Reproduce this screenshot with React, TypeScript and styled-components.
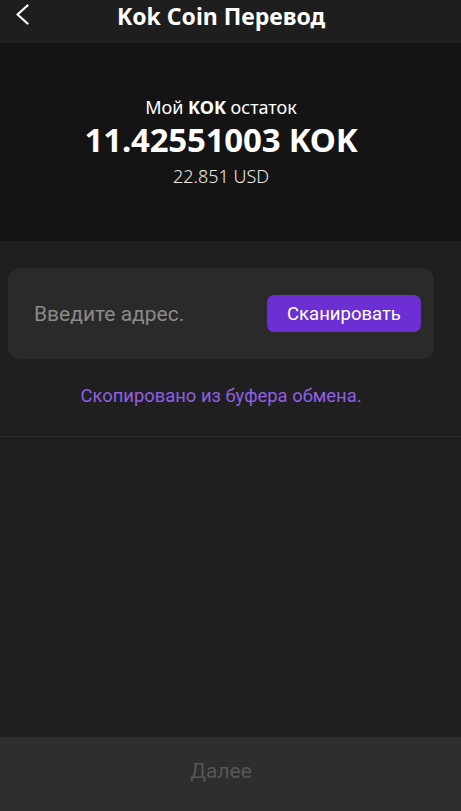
import styled, { createGlobalStyle } from 'styled-components'

const Global = createGlobalStyle`
  html, body {
    margin: 0;
    padding: 0;
    background: #1f1f1f;
  }
  #root {
    min-height: 100vh;
  }
`

// the app content is laid out in a 442px column; the last 19px are only background
const GUTTER = '19px'

const Page = styled.div`
  width: 461px;
  height: 811px;
  display: flex;
  flex-direction: column;
  background: #1f1f1f;
  font-family: 'Noto Sans', sans-serif;
  overflow: hidden;
`

const Header = styled.div`
  height: 43px;
  flex-shrink: 0;
  display: grid;
  grid-template-columns: 50px 1fr 50px;
  align-items: start;
  padding-right: ${GUTTER};
  background: #1e1e1e;
`

const BackButton = styled.button`
  width: 44px;
  height: 30px;
  border: none;
  background: none;
  display: flex;
  align-items: flex-start;
  justify-content: flex-start;
  padding: 3px 0 0 14px;
  cursor: pointer;
`

const Title = styled.h1`
  margin: 0;
  text-align: center;
  font-size: 23px;
  line-height: normal;
  font-weight: 700;
  color: #ffffff;
  white-space: nowrap;
`

const Balance = styled.section`
  height: 198px;
  flex-shrink: 0;
  background: #141414;
  display: flex;
  flex-direction: column;
  align-items: center;
  padding: 51px ${GUTTER} 0 0;
  box-sizing: border-box;
  color: #ffffff;
`

const BalanceLabel = styled.div`
  font-size: 18px;
  line-height: 26px;
  b {
    font-weight: 700;
  }
`

const BalanceAmount = styled.div`
  font-size: 33px;
  font-weight: 700;
  line-height: 40px;
  letter-spacing: -0.2px;
`

const BalanceFiat = styled.div`
  margin-top: 4px;
  font-size: 18px;
  font-weight: 300;
  line-height: 24px;
  color: #ececec;
`

const Body = styled.div`
  flex: 1;
  display: flex;
  flex-direction: column;
  padding-top: 27px;
`

const AddressCard = styled.div`
  margin: 0 calc(8px + ${GUTTER}) 0 8px;
  height: 91px;
  border-radius: 12px;
  background: #2a2a2a;
  display: flex;
  align-items: center;
  justify-content: space-between;
  padding: 0 13px 0 26px;
  box-sizing: border-box;
`

const AddressInput = styled.input`
  flex: 1;
  min-width: 0;
  border: none;
  outline: none;
  background: transparent;
  font-family: Roboto, sans-serif;
  font-size: 21px;
  color: #ffffff;
  padding: 0;
  &::placeholder {
    color: #8a8a8a;
  }
`

const ScanButton = styled.button`
  width: 154px;
  height: 37px;
  border: none;
  border-radius: 7px;
  background: #6b2fd4;
  color: #ffffff;
  font-family: Roboto, sans-serif;
  font-size: 18.5px;
  cursor: pointer;
`

const Notice = styled.div`
  margin-top: 26px;
  height: 51px;
  padding-right: ${GUTTER};
  text-align: center;
  font-family: Roboto, sans-serif;
  font-size: 18.4px;
  color: #8f5fe6;
`

const Divider = styled.hr`
  margin: 0;
  border: none;
  border-top: 1px solid #2c2c2c;
`

const Spacer = styled.div`
  flex: 1;
`

const NextButton = styled.button`
  height: 74px;
  flex-shrink: 0;
  border: none;
  background: #2e2e2e;
  color: #565656;
  font-family: Roboto, sans-serif;
  font-size: 21px;
  padding: 0 ${GUTTER} 7px 0;
`

export default function App() {
  return (
    <>
      <Global />
      <Page>
        <Header>
          <BackButton aria-label="Назад">
            <svg width="16" height="22" viewBox="0 0 16 22" fill="none">
              <path d="M13.5 2.5 L3.5 11.5 L13.5 20.5" stroke="#ffffff" strokeWidth="2.2" strokeLinecap="round" strokeLinejoin="round" />
            </svg>
          </BackButton>
          <Title>Kok Coin Перевод</Title>
          <div />
        </Header>
        <Balance>
          <BalanceLabel>
            Мой <b>KOK</b> остаток
          </BalanceLabel>
          <BalanceAmount>11.42551003 KOK</BalanceAmount>
          <BalanceFiat>22.851 USD</BalanceFiat>
        </Balance>
        <Body>
          <AddressCard>
            <AddressInput placeholder="Введите адрес." />
            <ScanButton>Сканировать</ScanButton>
          </AddressCard>
          <Notice>Скопировано из буфера обмена.</Notice>
          <Divider />
          <Spacer />
          <NextButton>Далее</NextButton>
        </Body>
      </Page>
    </>
  )
}
